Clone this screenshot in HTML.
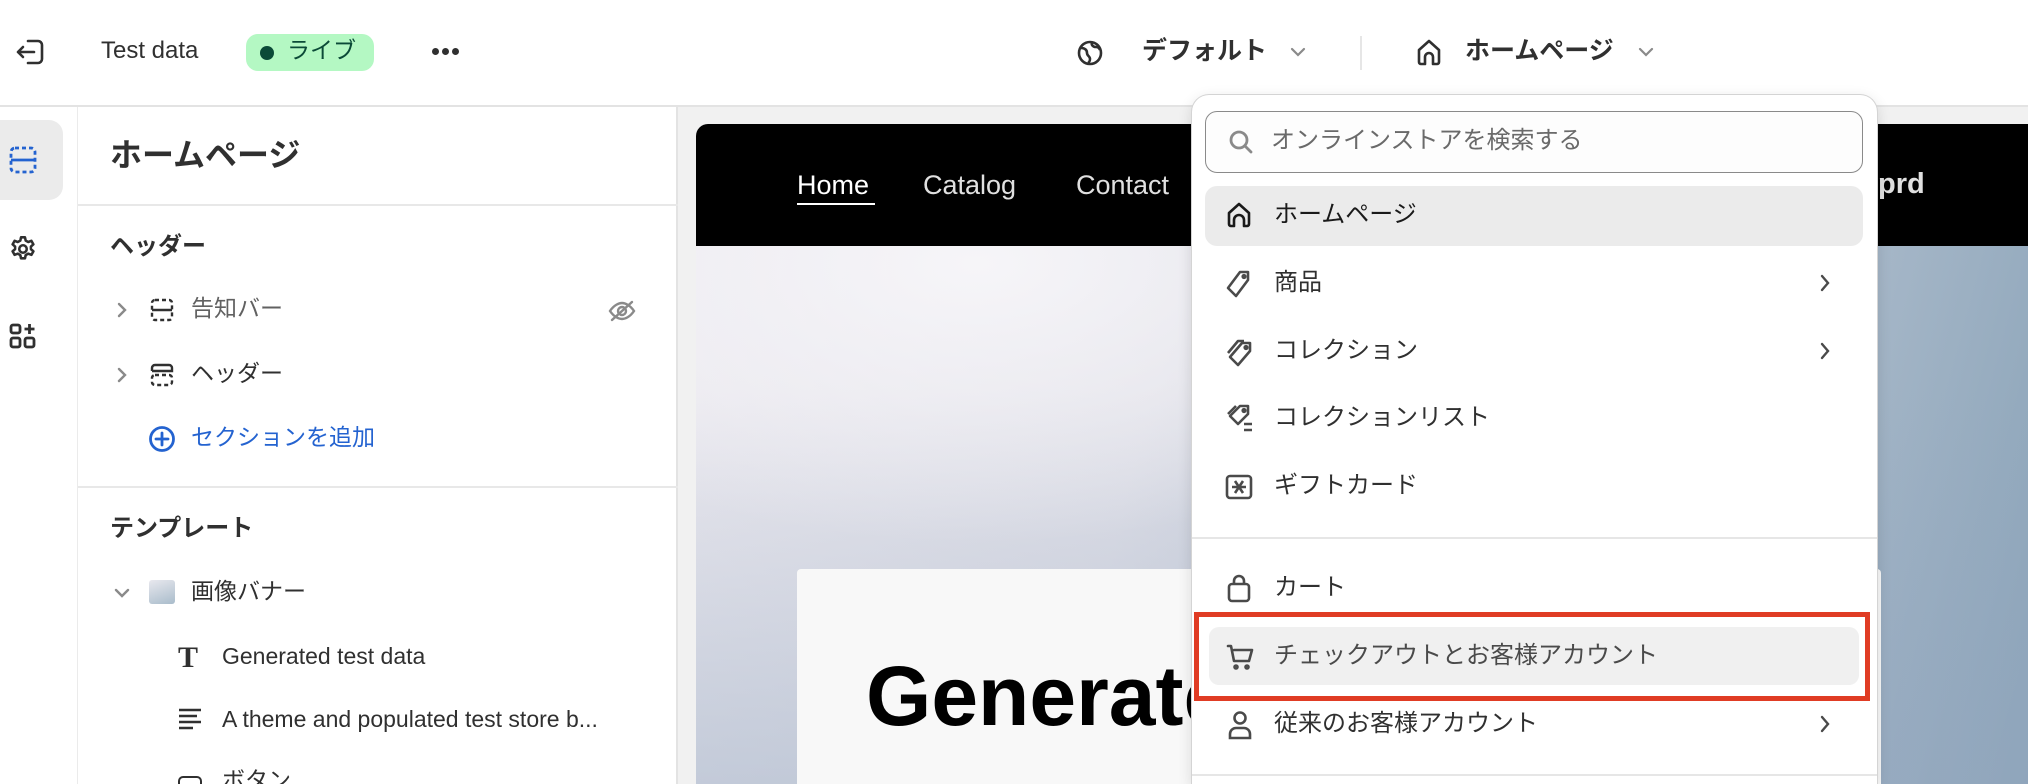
<!DOCTYPE html>
<html style="width:2028px;height:784px;overflow:hidden"><head><meta charset="utf-8"><style>
*{box-sizing:border-box;margin:0;padding:0}
html,body{width:2028px;height:784px;overflow:hidden}
body{background:#f1f1f1;font-family:"Liberation Sans","Noto Sans CJK JP",sans-serif;color:#303030}
#wrap{position:relative;width:2028px;height:784px;overflow:hidden}
.abs{position:absolute}
.top{left:0;top:0;width:2028px;height:107px;background:#fff;border-bottom:2px solid #e3e3e3}
.rail{left:0;top:107px;width:78px;height:677px;background:#fff;border-right:1px solid #ebebeb}
.panel{left:78px;top:107px;width:600px;height:677px;background:#fff;border-right:2px solid #e3e3e3}
.t{position:absolute;white-space:nowrap;line-height:1}
svg{position:absolute;overflow:visible}
.hr{position:absolute;left:78px;width:600px;height:2px;background:#e8e8e8}
.dd{left:1191px;top:94px;width:687px;height:690px;background:#fff;border:1.5px solid #d4d4d4;border-bottom:none;border-radius:18px 18px 0 0;box-shadow:0 4px 14px rgba(0,0,0,.12)}
.di{font-size:24px;color:#303030}
</style></head><body><div id="wrap">
<div class="abs top"></div>
<svg style="left:14px;top:37px" width="32" height="30" viewBox="0 0 32 30" fill="none" stroke="#303030" stroke-width="2.6" stroke-linecap="round" stroke-linejoin="round"><path d="M14 4h10a4 4 0 0 1 4 4v14a4 4 0 0 1-4 4H14"/><path d="M20 15H4M9 10l-5 5 5 5"/></svg>
<div class="t" style="left:101px;top:39px;font-size:24px;color:#303030">Test data</div>
<div class="abs" style="left:246px;top:34px;width:128px;height:37px;border-radius:12px;background:#b4f8c3"></div>
<div class="abs" style="left:260px;top:46px;width:14px;height:14px;border-radius:50%;background:#0b4a37"></div>
<div class="t" style="left:287px;top:39px;font-size:23px;color:#0b4a37">ライブ</div>
<div class="abs" style="left:432px;top:48px;width:7px;height:7px;border-radius:50%;background:#303030;box-shadow:10px 0 #303030,20px 0 #303030"></div>
<svg style="left:1076px;top:39px" width="28" height="28" viewBox="0 0 28 28" fill="none" stroke="#303030" stroke-width="2.6"><circle cx="14" cy="14" r="11"/><path d="M5 9c4 0 6 2 6 5s3 3 3 6-2 4-2 4M16 3c-1 3 1 5 4 5s4 3 4 3"/></svg>
<div class="t" style="left:1142px;top:39px;font-size:25px;font-weight:bold;color:#303030">デフォルト</div>
<svg style="left:1290px;top:47px" width="16" height="10" viewBox="0 0 16 10" fill="none" stroke="#8a8a8a" stroke-width="2.2" stroke-linecap="round"><path d="M2 2l6 6 6-6"/></svg>
<div class="abs" style="left:1360px;top:36px;width:2px;height:34px;background:#e6e6e6"></div>
<svg style="left:1416px;top:38px" width="26" height="28" viewBox="0 0 26 28" fill="none" stroke="#303030" stroke-width="2.6" stroke-linejoin="round"><path d="M3 12L13 3l10 9v12a2 2 0 0 1-2 2h-4v-7a4 4 0 0 0-8 0v7H5a2 2 0 0 1-2-2z"/></svg>
<div class="t" style="left:1465px;top:39px;font-size:25px;font-weight:bold;color:#303030">ホームページ</div>
<svg style="left:1638px;top:47px" width="16" height="10" viewBox="0 0 16 10" fill="none" stroke="#8a8a8a" stroke-width="2.2" stroke-linecap="round"><path d="M2 2l6 6 6-6"/></svg>

<div class="abs rail"></div>
<div class="abs" style="left:0;top:120px;width:63px;height:80px;background:#ebebeb;border-radius:0 14px 14px 0"></div>
<svg style="left:9px;top:146px" width="28" height="28" viewBox="0 0 28 28" fill="none" stroke="#2463d0" stroke-width="2.8" stroke-dasharray="4 3"><rect x="2" y="2" width="24" height="24" rx="4"/><path d="M2 14h24" stroke-dasharray="none"/></svg>
<svg style="left:9px;top:235px" width="28" height="28" viewBox="0 0 24 24" fill="none" stroke="#303030" stroke-width="2.2"><circle cx="12" cy="12" r="3.2"/><path d="M10.3 2h3.4l.6 2.8 2.2 1.2 2.7-1 1.7 3-2.1 1.9v2.2l2.1 1.9-1.7 3-2.7-1-2.2 1.2-.6 2.8h-3.4l-.6-2.8-2.2-1.2-2.7 1-1.7-3 2.1-1.9v-2.2L3.1 8l1.7-3 2.7 1 2.2-1.2z" stroke-linejoin="round"/></svg>
<svg style="left:9px;top:322px" width="28" height="28" viewBox="0 0 28 28" fill="none" stroke="#303030" stroke-width="2.8"><rect x="2" y="3" width="9" height="8" rx="2"/><rect x="2" y="16" width="9" height="9" rx="2"/><rect x="16" y="16" width="9" height="9" rx="2"/><path d="M20.5 2v10M15.5 7h10"/></svg>

<div class="abs panel"></div>
<div class="t" style="left:110px;top:139px;font-size:32px;font-weight:bold;color:#303030">ホームページ</div>
<div class="hr" style="top:204px"></div>
<div class="t" style="left:110px;top:235px;font-size:24px;font-weight:bold">ヘッダー</div>
<svg style="left:117px;top:302px" width="10" height="16" viewBox="0 0 10 16" fill="none" stroke="#8a8a8a" stroke-width="2.4" stroke-linecap="round"><path d="M2 2l6 6-6 6"/></svg>
<svg style="left:150px;top:298px" width="24" height="24" viewBox="0 0 24 24" fill="none" stroke="#303030" stroke-width="2.4" stroke-dasharray="4 3"><rect x="2" y="2" width="20" height="20" rx="3"/><path d="M2 12h20" stroke-dasharray="none"/></svg>
<div class="t" style="left:191px;top:297px;font-size:23px;color:#616161">告知バー</div>
<svg style="left:608px;top:300px" width="28" height="22" viewBox="0 0 28 22" fill="none" stroke="#8a8a8a" stroke-width="2.4" stroke-linecap="round"><path d="M2 11c4-6 9-8 12-8s8 2 12 8c-4 6-9 8-12 8s-8-2-12-8z"/><circle cx="14" cy="11" r="4"/><path d="M4 20L24 2"/></svg>
<svg style="left:117px;top:367px" width="10" height="16" viewBox="0 0 10 16" fill="none" stroke="#8a8a8a" stroke-width="2.4" stroke-linecap="round"><path d="M2 2l6 6-6 6"/></svg>
<svg style="left:150px;top:363px" width="24" height="24" viewBox="0 0 24 24" fill="none" stroke="#303030" stroke-width="2.4"><path d="M2 8V5a3 3 0 0 1 3-3h14a3 3 0 0 1 3 3v3H2"/><rect x="2" y="12" width="20" height="10" rx="3" stroke-dasharray="4 3"/></svg>
<div class="t" style="left:191px;top:362px;font-size:23px;color:#303030">ヘッダー</div>
<svg style="left:148px;top:425px" width="28" height="28" viewBox="0 0 28 28" fill="none" stroke="#2463d0" stroke-width="2.8" stroke-linecap="round"><circle cx="14" cy="14" r="11.5"/><path d="M14 8v12M8 14h12"/></svg>
<div class="t" style="left:191px;top:426px;font-size:23px;color:#2463d0">セクションを追加</div>
<div class="hr" style="top:486px"></div>
<div class="t" style="left:110px;top:517px;font-size:24px;font-weight:bold">テンプレート</div>
<svg style="left:114px;top:588px" width="16" height="10" viewBox="0 0 16 10" fill="none" stroke="#8a8a8a" stroke-width="2.4" stroke-linecap="round"><path d="M2 2l6 6 6-6"/></svg>
<div class="abs" style="left:149px;top:580px;width:26px;height:24px;border-radius:3px;background:linear-gradient(160deg,#e8e8ee,#a9bccb)"></div>
<div class="t" style="left:191px;top:580px;font-size:23px;color:#303030">画像バナー</div>
<div class="t" style="left:178px;top:643px;font-size:30px;font-weight:bold;font-family:'Liberation Serif',serif;color:#303030">T</div>
<div class="t" style="left:222px;top:645px;font-size:23px;color:#303030">Generated test data</div>
<svg style="left:178px;top:708px" width="24" height="22" viewBox="0 0 24 22" fill="none" stroke="#303030" stroke-width="2.4"><path d="M1 2h22M1 8h18M1 14h22M1 20h14"/></svg>
<div class="t" style="left:222px;top:708px;font-size:23px;color:#303030">A theme and populated test store b...</div>
<div class="abs" style="left:178px;top:776px;width:24px;height:14px;border:2.4px solid #303030;border-radius:5px"></div>
<div class="t" style="left:222px;top:769px;font-size:23px;color:#303030">ボタン</div>

<div class="abs" style="left:696px;top:124px;width:1332px;height:660px;border-radius:12px 0 0 0;overflow:hidden;background:linear-gradient(105deg,#eceaf0 0%,#e0e0e8 35%,#c3cbd8 60%,#9fb2c4 85%,#8aa3b8 100%)">
 <div class="abs" style="left:0;top:0;width:100%;height:660px;background:radial-gradient(ellipse 560px 280px at 280px 140px,rgba(247,246,249,.95),rgba(247,246,249,0)),linear-gradient(180deg,rgba(0,0,0,0) 40%,rgba(150,168,192,.45) 100%)"></div>
 <div class="abs" style="left:0;top:0;width:100%;height:122px;background:#000"></div>
 <div class="t" style="left:101px;top:48px;font-size:27px;color:#fff">Home</div>
 <div class="abs" style="left:101px;top:79px;width:78px;height:2px;background:#fff"></div>
 <div class="t" style="left:227px;top:48px;font-size:27px;color:#e0e0e0">Catalog</div>
 <div class="t" style="left:380px;top:48px;font-size:27px;color:#e0e0e0">Contact</div>
 <div class="t" style="left:1182px;top:46px;font-size:29px;font-weight:bold;color:#e0e0e0">prd</div>
 <div class="abs" style="left:101px;top:445px;width:1084px;height:260px;background:#f8f8f8;border-radius:4px"></div>
 <div class="t" style="left:170px;top:530px;font-size:84px;font-weight:bold;color:#000">Generated</div>
</div>

<div class="abs dd"></div>
<div class="abs" style="left:1205px;top:111px;width:658px;height:62px;border:1.5px solid #8a8a8a;border-radius:12px;background:#fdfdfd"></div>
<svg style="left:1228px;top:129px" width="26" height="26" viewBox="0 0 26 26" fill="none" stroke="#8a8a8a" stroke-width="2.8" stroke-linecap="round"><circle cx="11" cy="11" r="8"/><path d="M17 17l6 6"/></svg>
<div class="t di" style="left:1271px;top:129px;color:#6a6a6a">オンラインストアを検索する</div>
<div class="abs" style="left:1205px;top:186px;width:658px;height:60px;background:#ebebeb;border-radius:12px"></div>
<svg style="left:1227px;top:202px" width="24" height="26" viewBox="0 0 24 26" fill="none" stroke="#1a1a1a" stroke-width="2.6" stroke-linejoin="round"><path d="M2 11L12 2l10 9v11a2 2 0 0 1-2 2h-3v-6a5 5 0 0 0-10 0v6H4a2 2 0 0 1-2-2z"/></svg>
<div class="t di" style="left:1274px;top:203px;color:#1a1a1a">ホームページ</div>

<svg style="left:1226px;top:270px" width="26" height="28" viewBox="0 0 26 28" fill="none" stroke="#4a4a4a" stroke-width="2.6" stroke-linejoin="round"><path d="M14 2h8v8L10 26 2 18z"/><circle cx="18" cy="6.5" r="1.3"/></svg>
<div class="t di" style="left:1274px;top:271px">商品</div>
<svg style="left:1820px;top:274px" width="10" height="18" viewBox="0 0 10 18" fill="none" stroke="#4a4a4a" stroke-width="2.4" stroke-linecap="round"><path d="M2 2l6 7-6 7"/></svg>

<svg style="left:1226px;top:337px" width="28" height="30" viewBox="0 0 28 30" fill="none" stroke="#4a4a4a" stroke-width="2.6" stroke-linejoin="round"><path d="M16 6h8v8L12 28 4 20z"/><path d="M2 16L12 4h6"/><circle cx="20" cy="10.5" r="1.3"/></svg>
<div class="t di" style="left:1274px;top:339px">コレクション</div>
<svg style="left:1820px;top:342px" width="10" height="18" viewBox="0 0 10 18" fill="none" stroke="#4a4a4a" stroke-width="2.4" stroke-linecap="round"><path d="M2 2l6 7-6 7"/></svg>

<svg style="left:1226px;top:404px" width="30" height="30" viewBox="0 0 30 30" fill="none" stroke="#4a4a4a" stroke-width="2.6" stroke-linejoin="round"><path d="M14 2h8v8L12 20 4 12z"/><path d="M2 10L10 2"/><circle cx="18" cy="6.5" r="1.3"/><path d="M18 20h8M18 26h8"/></svg>
<div class="t di" style="left:1274px;top:406px">コレクションリスト</div>

<svg style="left:1225px;top:473px" width="28" height="28" viewBox="0 0 28 28" fill="none" stroke="#4a4a4a" stroke-width="2.6"><rect x="2" y="3" width="24" height="22" rx="3"/><path d="M10 8l4 6 4-6M10 20l4-6 4 6M7 14h14"/></svg>
<div class="t di" style="left:1274px;top:474px">ギフトカード</div>

<div class="abs" style="left:1192px;top:537px;width:685px;height:2px;background:#e6e6e6"></div>

<svg style="left:1227px;top:573px" width="24" height="30" viewBox="0 0 24 30" fill="none" stroke="#4a4a4a" stroke-width="2.6" stroke-linejoin="round"><path d="M7 11V8a5 5 0 0 1 10 0v3"/><rect x="2" y="11" width="20" height="17" rx="3"/></svg>
<div class="t di" style="left:1274px;top:576px">カート</div>

<div class="abs" style="left:1209px;top:627px;width:650px;height:58px;background:#f0f0f0;border-radius:10px"></div>
<div class="abs" style="left:1194px;top:612px;width:676px;height:89px;border:5px solid #e03c24"></div>
<svg style="left:1226px;top:643px" width="28" height="28" viewBox="0 0 28 28" fill="none" stroke="#4a4a4a" stroke-width="2.6" stroke-linejoin="round" stroke-linecap="round"><path d="M2 3h3l3 15h15l3-11H8"/><circle cx="10" cy="24" r="1.5"/><circle cx="21" cy="24" r="1.5"/></svg>
<div class="t di" style="left:1274px;top:644px;color:#4a4a4a">チェックアウトとお客様アカウント</div>

<svg style="left:1228px;top:710px" width="24" height="30" viewBox="0 0 24 30" fill="none" stroke="#4a4a4a" stroke-width="2.6"><circle cx="12" cy="8" r="5.5"/><path d="M2 28v-4a6 6 0 0 1 6-6h8a6 6 0 0 1 6 6v4z"/></svg>
<div class="t di" style="left:1274px;top:712px">従来のお客様アカウント</div>
<svg style="left:1820px;top:715px" width="10" height="18" viewBox="0 0 10 18" fill="none" stroke="#4a4a4a" stroke-width="2.4" stroke-linecap="round"><path d="M2 2l6 7-6 7"/></svg>
<div class="abs" style="left:1192px;top:774px;width:685px;height:2px;background:#e6e6e6"></div>
</div></body></html>
